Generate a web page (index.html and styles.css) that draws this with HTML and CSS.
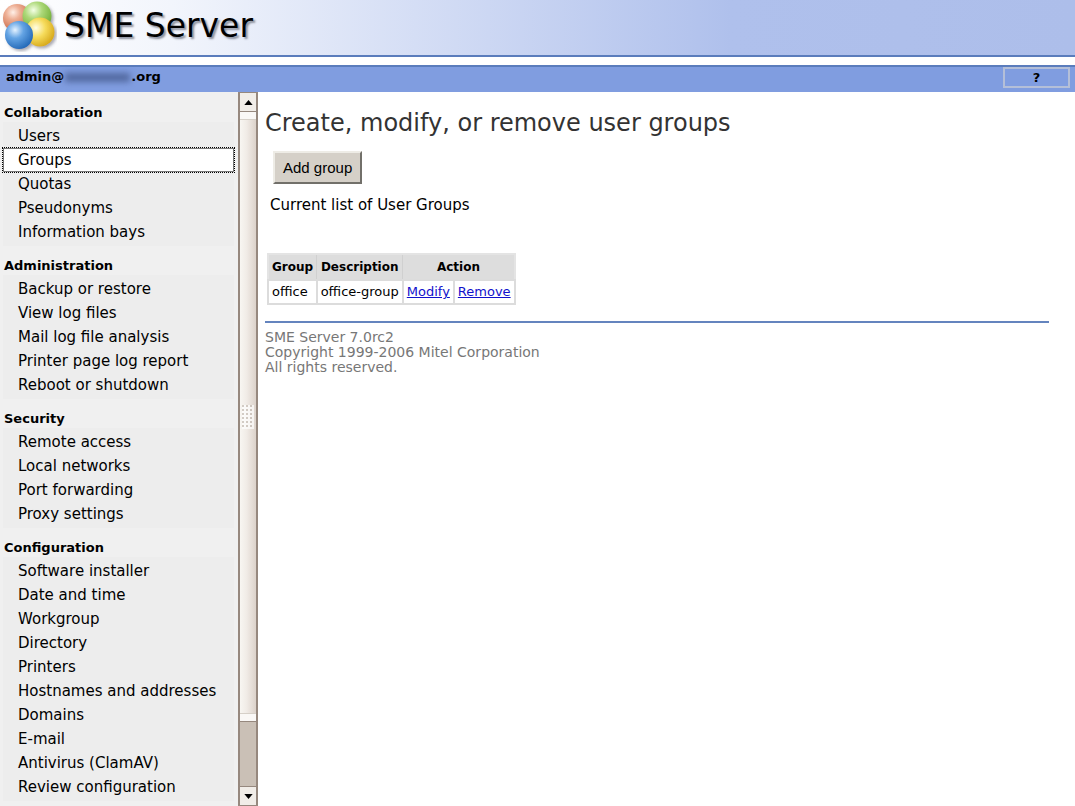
FILE: index.html
```html
<!DOCTYPE html>
<html lang="en">
<head>
<meta charset="utf-8">
<title>SME Server</title>
<link rel="stylesheet" href="styles.css">
</head>
<body>
<header class="banner">
  <svg class="logo" viewBox="0 0 56 52" role="img" aria-label="SME Server logo">
    <defs>
      <radialGradient id="red" cx=".36" cy=".3" r=".72"><stop offset="0" stop-color="#fff0e8"/><stop offset=".35" stop-color="#eeb096"/><stop offset="1" stop-color="#c86440"/></radialGradient>
      <radialGradient id="green" cx=".38" cy=".3" r=".75"><stop offset="0" stop-color="#f4ffe6"/><stop offset=".4" stop-color="#acd878"/><stop offset="1" stop-color="#6caa30"/></radialGradient>
      <radialGradient id="yellow" cx=".36" cy=".36" r=".72"><stop offset="0" stop-color="#fffde4"/><stop offset=".45" stop-color="#f6dc5c"/><stop offset="1" stop-color="#d4a414"/></radialGradient>
      <radialGradient id="blue" cx=".36" cy=".32" r=".75"><stop offset="0" stop-color="#e4f2ff"/><stop offset=".4" stop-color="#64a4e4"/><stop offset="1" stop-color="#1e64b4"/></radialGradient>
      <filter id="shade" x="-20%" y="-20%" width="150%" height="150%"><feDropShadow dx="2" dy="2" stdDeviation="1.5" flood-color="#556" flood-opacity=".5"/></filter>
    </defs>
    <g filter="url(#shade)">
      <circle cx="16" cy="18" r="14" fill="url(#red)"/>
      <circle cx="36" cy="16" r="14.500" fill="url(#green)"/>
      <circle cx="39" cy="32" r="14.500" fill="url(#yellow)"/>
      <circle cx="18" cy="35" r="14" fill="url(#blue)"/>
    </g>
  </svg>
  <span class="brand">SME Server</span>
</header>
<div class="userbar">
  <div class="account">admin@<span class="redacted"></span>.org</div>
  <a class="help" href="#">?</a>
</div>
<div class="frames">
  <nav class="menu">
    <section>
      <h2>Collaboration</h2>
      <ul>
        <li><a href="#">Users</a></li>
        <li><a class="current" href="#">Groups</a></li>
        <li><a href="#">Quotas</a></li>
        <li><a href="#">Pseudonyms</a></li>
        <li><a href="#">Information bays</a></li>
      </ul>
    </section>
    <section>
      <h2>Administration</h2>
      <ul>
        <li><a href="#">Backup or restore</a></li>
        <li><a href="#">View log files</a></li>
        <li><a href="#">Mail log file analysis</a></li>
        <li><a href="#">Printer page log report</a></li>
        <li><a href="#">Reboot or shutdown</a></li>
      </ul>
    </section>
    <section>
      <h2>Security</h2>
      <ul>
        <li><a href="#">Remote access</a></li>
        <li><a href="#">Local networks</a></li>
        <li><a href="#">Port forwarding</a></li>
        <li><a href="#">Proxy settings</a></li>
      </ul>
    </section>
    <section>
      <h2>Configuration</h2>
      <ul>
        <li><a href="#">Software installer</a></li>
        <li><a href="#">Date and time</a></li>
        <li><a href="#">Workgroup</a></li>
        <li><a href="#">Directory</a></li>
        <li><a href="#">Printers</a></li>
        <li><a href="#">Hostnames and addresses</a></li>
        <li><a href="#">Domains</a></li>
        <li><a href="#">E-mail</a></li>
        <li><a href="#">Antivirus (ClamAV)</a></li>
        <li><a href="#">Review configuration</a></li>
      </ul>
    </section>
  </nav>
  <div class="scrollbar" aria-hidden="true">
    <div class="step"><svg viewBox="0 0 10 6"><path d="M5 0L10 6H0Z"/></svg></div>
    <div class="thumb"><div class="grip"></div></div>
    <div class="track"></div>
    <div class="step"><svg viewBox="0 0 10 6"><path d="M5 6L10 0H0Z"/></svg></div>
  </div>
  <main class="content">
    <h1>Create, modify, or remove user groups</h1>
    <button class="add" type="button">Add group</button>
    <p class="caption" id="caption">Current list of User Groups</p>
    <table class="groups" aria-labelledby="caption">
      <thead><tr><th>Group</th><th>Description</th><th colspan="2">Action</th></tr></thead>
      <tbody><tr><td>office</td><td>office-group</td><td><a href="#">Modify</a></td><td><a href="#">Remove</a></td></tr></tbody>
    </table>
    <footer>SME Server 7.0rc2<br>Copyright 1999-2006 Mitel Corporation<br>All rights reserved.</footer>
  </main>
</div>
</body>
</html>
```
FILE: styles.css
```css
* { box-sizing: border-box; }
body {
  margin: 0;
  height: 100vh;
  overflow: hidden;
  display: flex;
  flex-direction: column;
  background: #fff;
  color: #000;
  font: 15px/16px "DejaVu Sans", Verdana, sans-serif;
}
h1, h2, ul, p { margin: 0; padding: 0; }
.banner {
  flex: none;
  display: flex;
  align-items: center;
  height: 57px;
  padding: 0 0 4px 1px;
  gap: 7px;
  border-bottom: 2px solid #5a7cbc;
  background: linear-gradient(to right, #fff 0, #f2f5fc 16%, #afc0ec 68%, #adbeea 100%);
}
.logo { width: 56px; height: 52px; }
.brand {
  font-size: 33px;
  line-height: 40px;
  text-shadow: 2px 2px 2px #8a8f9c;
}
.userbar {
  flex: none;
  display: flex;
  justify-content: space-between;
  align-items: flex-start;
  height: 27px;
  margin-top: 8px;
  padding: 0 5px;
  border-top: 2px solid #5a7cbc;
  background: #809de0;
  font-size: 13px;
  font-weight: bold;
}
.account { display: flex; padding: 2px 0 0 1px; }
.redacted {
  width: 65px;
  height: 9px;
  margin: 4px 1px 0;
  background: #5269a0;
  filter: blur(3px);
}
.help {
  width: 67px;
  height: 21px;
  border: 2px solid #b4bfd8;
  color: #000;
  text-align: center;
  text-decoration: none;
  line-height: 18px;
}
.frames { flex: 1; min-height: 0; display: flex; }
.menu {
  flex: none;
  width: 238px;
  padding: 12px 4px 0 3px;
  overflow: hidden;
  background: #f0f0f0;
}
.menu section { margin-bottom: 11px; }
.menu h2 { padding-left: 1px; font-size: 13px; line-height: 18px; }
.menu ul { list-style: none; background: #ededed; padding: 2px 0; }
.menu a {
  display: block;
  height: 24px;
  padding-left: 14px;
  border: 1px solid transparent;
  color: #000;
  line-height: 22px;
  text-decoration: none;
}
.menu .current { background: #fff; border-color: #777; outline: 1px dotted #000; }
.scrollbar {
  flex: none;
  width: 20px;
  display: flex;
  flex-direction: column;
  border: solid #96887e;
  border-width: 1px 2px;
  background: #cac0b6;
}
.step {
  height: 18px;
  display: flex;
  align-items: center;
  justify-content: center;
  background: #f1ede8;
}
.step svg { width: 9px; height: 5px; }
.thumb {
  flex: 611;
  display: flex;
  align-items: center;
  justify-content: center;
  border: solid #96887e;
  border-width: 1px 0;
  background:
    linear-gradient(#faf8f6, #faf8f6) 0 0 / 100% 7px no-repeat,
    linear-gradient(#d6d0c8, #d6d0c8) 0 7px / 100% 1px no-repeat,
    linear-gradient(#faf8f6, #faf8f6) 0 100% / 100% 7px no-repeat,
    linear-gradient(#d6d0c8, #d6d0c8) 0 calc(100% - 7px) / 100% 1px no-repeat,
    linear-gradient(to right, #f8f6f2, #f1ece7 40%, #dcd2ca);
}
.grip {
  width: 12px;
  height: 24px;
  background: conic-gradient(#fff 75%, #c4bcb4 0) 0 0 / 4px 4px;
  opacity: .7;
}
.track { flex: 64; border-bottom: 1px solid #96887e; }
.content { flex: 1; min-width: 0; padding: 17px 26px 0 7px; }
h1 { font-size: 24px; line-height: 28px; font-weight: normal; color: #333; }
.add {
  display: block;
  height: 33px;
  margin: 14px 0 0 8px;
  padding: 0 8px;
  border: 2px solid;
  border-color: #eeece6 #72706a #72706a #eeece6;
  background: #d5d0c8;
  color: #000;
  font: 15px/24px "Liberation Sans", Arial, sans-serif;
}
.caption { margin: 13px 0 0 5px; }
.groups {
  margin: 40px 0 0 2px;
  border: 2px solid #e4e4e4;
  border-collapse: collapse;
  font-size: 12px;
}
.groups th { height: 26px; padding: 0 3px; background: #ddd; border: 1px solid #d0d0d0; }
.groups td { height: 24px; padding: 0 3px; border: 2px solid #dcdcdc; font-size: 13px; }
.groups a { color: #11c; }
footer {
  margin-top: 16px;
  padding-top: 7px;
  border-top: 2px solid #6484be;
  color: #777;
  font-size: 14px;
  line-height: 15px;
}
```
